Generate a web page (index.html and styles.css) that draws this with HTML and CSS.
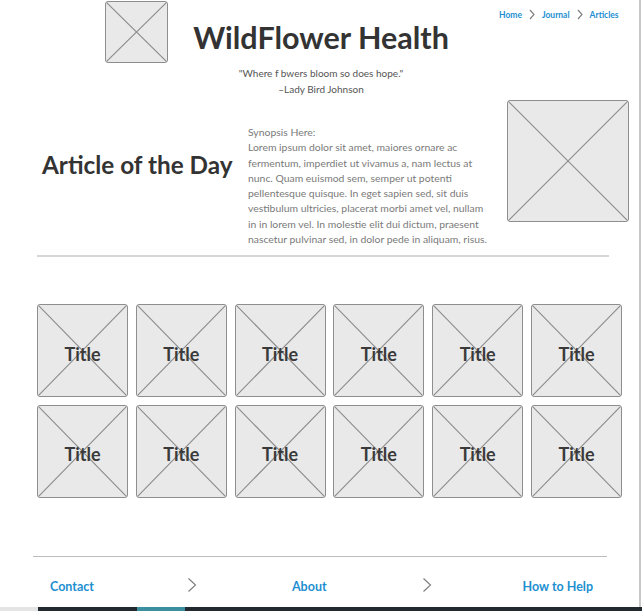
FILE: index.html
```html
<!DOCTYPE html>
<html>
<head>
<meta charset="utf-8">
<link rel="stylesheet" href="styles.css">
</head>
<body>
<div class="page">
  <header class="header">
    <div class="ph logo">
      <svg viewBox="0 0 100 100" preserveAspectRatio="none"><line x1="0" y1="0" x2="100" y2="100"/><line x1="100" y1="0" x2="0" y2="100"/></svg>
    </div>
    <div class="brand">
      <h1 class="site-title">WildFlower Health</h1>
      <p class="quote">"Where f bwers bloom so does hope."<br>–Lady Bird Johnson</p>
    </div>
    <nav class="crumbs">
      <a>Home</a>
      <svg class="chev-s" viewBox="0 0 6 11"><polyline points="1,1 5,5.5 1,10"/></svg>
      <a>Journal</a>
      <svg class="chev-s" viewBox="0 0 6 11"><polyline points="1,1 5,5.5 1,10"/></svg>
      <a>Articles</a>
    </nav>
  </header>

  <section class="feature">
    <h2 class="feature-title">Article of the Day</h2>
    <p class="synopsis">Synopsis Here:<br>Lorem ipsum dolor sit amet, maiores ornare ac<br>fermentum, imperdiet ut vivamus a, nam lectus at<br>nunc. Quam euismod sem, semper ut potenti<br>pellentesque quisque. In eget sapien sed, sit duis<br>vestibulum ultricies, placerat morbi amet vel, nullam<br>in in lorem vel. In molestie elit dui dictum, praesent<br>nascetur pulvinar sed, in dolor pede in aliquam, risus.</p>
    <div class="ph feature-img">
      <svg viewBox="0 0 100 100" preserveAspectRatio="none"><line x1="0" y1="0" x2="100" y2="100"/><line x1="100" y1="0" x2="0" y2="100"/></svg>
    </div>
  </section>

  <hr class="rule">

  <section class="grid">
    <div class="ph tile"><svg viewBox="0 0 100 100" preserveAspectRatio="none"><line x1="0" y1="0" x2="100" y2="100"/><line x1="100" y1="0" x2="0" y2="100"/></svg><span>Title</span></div>
    <div class="ph tile"><svg viewBox="0 0 100 100" preserveAspectRatio="none"><line x1="0" y1="0" x2="100" y2="100"/><line x1="100" y1="0" x2="0" y2="100"/></svg><span>Title</span></div>
    <div class="ph tile"><svg viewBox="0 0 100 100" preserveAspectRatio="none"><line x1="0" y1="0" x2="100" y2="100"/><line x1="100" y1="0" x2="0" y2="100"/></svg><span>Title</span></div>
    <div class="ph tile"><svg viewBox="0 0 100 100" preserveAspectRatio="none"><line x1="0" y1="0" x2="100" y2="100"/><line x1="100" y1="0" x2="0" y2="100"/></svg><span>Title</span></div>
    <div class="ph tile"><svg viewBox="0 0 100 100" preserveAspectRatio="none"><line x1="0" y1="0" x2="100" y2="100"/><line x1="100" y1="0" x2="0" y2="100"/></svg><span>Title</span></div>
    <div class="ph tile"><svg viewBox="0 0 100 100" preserveAspectRatio="none"><line x1="0" y1="0" x2="100" y2="100"/><line x1="100" y1="0" x2="0" y2="100"/></svg><span>Title</span></div>
    <div class="ph tile"><svg viewBox="0 0 100 100" preserveAspectRatio="none"><line x1="0" y1="0" x2="100" y2="100"/><line x1="100" y1="0" x2="0" y2="100"/></svg><span>Title</span></div>
    <div class="ph tile"><svg viewBox="0 0 100 100" preserveAspectRatio="none"><line x1="0" y1="0" x2="100" y2="100"/><line x1="100" y1="0" x2="0" y2="100"/></svg><span>Title</span></div>
    <div class="ph tile"><svg viewBox="0 0 100 100" preserveAspectRatio="none"><line x1="0" y1="0" x2="100" y2="100"/><line x1="100" y1="0" x2="0" y2="100"/></svg><span>Title</span></div>
    <div class="ph tile"><svg viewBox="0 0 100 100" preserveAspectRatio="none"><line x1="0" y1="0" x2="100" y2="100"/><line x1="100" y1="0" x2="0" y2="100"/></svg><span>Title</span></div>
    <div class="ph tile"><svg viewBox="0 0 100 100" preserveAspectRatio="none"><line x1="0" y1="0" x2="100" y2="100"/><line x1="100" y1="0" x2="0" y2="100"/></svg><span>Title</span></div>
    <div class="ph tile"><svg viewBox="0 0 100 100" preserveAspectRatio="none"><line x1="0" y1="0" x2="100" y2="100"/><line x1="100" y1="0" x2="0" y2="100"/></svg><span>Title</span></div>
  </section>

  <footer class="footer">
    <a class="f-link f-contact">Contact</a>
    <svg class="chev-l chev-1" viewBox="0 0 10 16"><polyline points="1.5,1.5 8.5,8 1.5,14.5"/></svg>
    <a class="f-link f-about">About</a>
    <svg class="chev-l chev-2" viewBox="0 0 10 16"><polyline points="1.5,1.5 8.5,8 1.5,14.5"/></svg>
    <a class="f-link f-help">How to Help</a>
  </footer>
</div>
<div class="taskbar"><span class="tb-left"></span><span class="tb-dark"></span><span class="tb-teal"></span><span class="tb-dark2"></span></div>
</body>
</html>
```

FILE: styles.css
```css
* { box-sizing: border-box; }
html, body { margin: 0; padding: 0; background: #fff; }
body {
  width: 642px;
  height: 611px;
  overflow: hidden;
  font-family: Lato, "Open Sans", sans-serif;
}
.page {
  width: 641px;
  height: 607px;
  border-right: 2px solid #c9c9c9;
}

/* placeholder image */
.ph {
  position: relative;
  background: #e9e9e9;
  border: 1.5px solid #8e8e8e;
  border-radius: 3px;
  overflow: hidden;
}
.ph svg {
  display: block;
  width: 100%;
  height: 100%;
}
.ph line {
  stroke: #8a8a8a;
  stroke-width: 1.1;
  vector-effect: non-scaling-stroke;
}

/* header */
.header {
  display: flex;
  align-items: flex-start;
  padding-left: 105px;
  padding-top: 1px;
}
.logo {
  width: 63px;
  height: 62px;
  flex: none;
}
.brand {
  width: 282px;
  margin-left: 12px;
  text-align: center;
}
.site-title {
  margin: 18px 0 0;
  font-size: 30.5px;
  line-height: 36px;
  font-weight: 700;
  color: #333;
  white-space: nowrap;
}
.quote {
  margin: 10px 0 0;
  font-size: 10px;
  line-height: 16px;
  color: #555;
}
.crumbs {
  display: flex;
  align-items: center;
  gap: 7px;
  margin-left: 37px;
  margin-top: 9px;
  font-size: 8.5px;
  font-weight: 700;
  color: #1d8fd0;
}
.chev-s {
  width: 6px;
  height: 11px;
  margin-top: -1px;
}
.chev-s polyline, .chev-l polyline {
  fill: none;
  stroke: #808080;
  stroke-width: 1.2;
}

/* feature */
.feature {
  display: flex;
  align-items: flex-start;
  padding-left: 42px;
  margin-top: 3px;
  height: 152px;
}
.feature-title {
  width: 206px;
  flex: none;
  margin: 50px 0 0;
  font-size: 24.3px;
  line-height: 30px;
  font-weight: 700;
  color: #333;
  white-space: nowrap;
}
.synopsis {
  margin: 25px 0 0;
  width: 250px;
  flex: none;
  font-size: 10.4px;
  line-height: 15.3px;
  color: #7a7a7a;
  white-space: nowrap;
}
.feature-img {
  width: 122px;
  height: 122px;
  margin-left: 9px;
  flex: none;
}

.rule {
  margin: 3px 0 0 37px;
  width: 572px;
  height: 2px;
  border: 0;
  background: #d6d6d6;
}

/* grid */
.grid {
  display: grid;
  grid-template-columns: repeat(6, 91px);
  grid-auto-rows: 93px;
  column-gap: 7.8px;
  row-gap: 7.5px;
  margin: 47px 0 0 37px;
}
.tile span {
  position: absolute;
  inset: 0;
  display: flex;
  align-items: center;
  justify-content: center;
  font-size: 18px;
  font-weight: 700;
  color: #3a3a3a;
  padding-top: 6px;
}

/* footer */
.footer {
  display: flex;
  align-items: center;
  margin: 58px 0 0 33px;
  width: 574px;
  border-top: 1px solid #bdbdbd;
  height: 49px;
  padding-top: 12px;
}
.f-link {
  font-size: 12.5px;
  font-weight: 700;
  color: #1d8fd0;
}
.f-contact { margin-left: 17px; }
.chev-l { width: 10px; height: 16px; margin-top: -4px; }
.chev-1 { margin-left: 93px; }
.f-about { margin-left: 95px; }
.chev-2 { margin-left: 95px; }
.f-help { margin-left: 91px; }

.taskbar {
  display: flex;
  height: 4px;
}
.tb-left { width: 38px; background: #e4e4e4; }
.tb-dark { width: 99px; background: #222a30; }
.tb-teal { width: 48px; background: #3b8f9e; }
.tb-dark2 { flex: 1; background: #222a30; }
```
